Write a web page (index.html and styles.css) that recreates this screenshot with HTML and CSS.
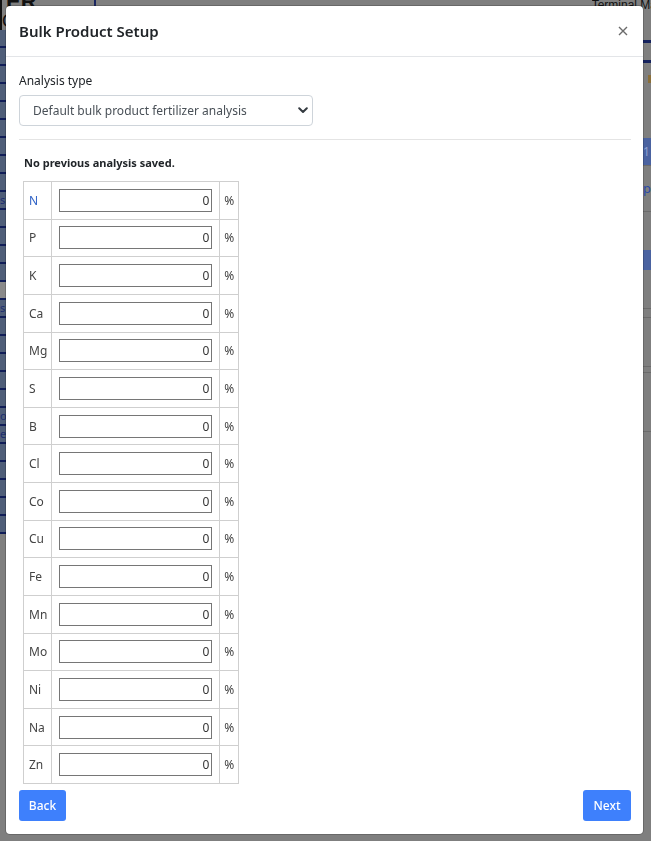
FILE: index.html
```html
<!DOCTYPE html>
<html lang="en">
<head>
<meta charset="utf-8">
<title>Bulk Product Setup</title>
<link rel="stylesheet" href="styles.css">
</head>
<body>
<div class="page">
  <div class="sidebar">
    <div class="brand"><span class="brand-text">ER</span><span class="brand-c">C</span></div>
    <div class="side-list">
      <div class="side-item"></div><div class="side-item"></div><div class="side-item"></div><div class="side-item"></div>
      <div class="side-item"></div><div class="side-item"></div><div class="side-item"></div><div class="side-item"></div>
      <div class="side-item"></div><div class="side-item"><span>s</span></div><div class="side-item"></div><div class="side-item"></div>
      <div class="side-item"></div><div class="side-item"></div><div class="side-item gray"></div><div class="side-item"><span>s</span></div>
      <div class="side-item"></div><div class="side-item"></div><div class="side-item"></div><div class="side-item"></div>
      <div class="side-item"></div><div class="side-item"><span>on</span></div><div class="side-item"><span>e</span></div><div class="side-item"></div>
      <div class="side-item"></div><div class="side-item"></div><div class="side-item"></div><div class="side-item"></div>
    </div>
  </div>
  <div class="main">
    <div class="topbar"><span class="top-title">Terminal Ma</span></div>
    <div class="right-strip">
      <div class="rs-line navy"></div>
      <div class="rs-gap g18"></div>
      <div class="rs-line navy"></div>
      <div class="rs-gap g12"></div>
      <div class="rs-tan"></div>
      <div class="rs-gap g56"></div>
      <div class="rs-blue">1</div>
      <div class="rs-line dark"></div>
      <div class="rs-gap g16"></div>
      <div class="rs-p">p</div>
      <div class="rs-gap g18"></div>
      <div class="rs-line dark"></div>
      <div class="rs-gap g38"></div>
      <div class="rs-blue small"></div>
      <div class="rs-gap g38"></div>
      <div class="rs-line dark"></div>
      <div class="rs-gap g8"></div>
      <div class="rs-line dark"></div>
      <div class="rs-gap g48"></div>
      <div class="rs-line dark"></div>
      <div class="rs-gap g5"></div>
      <div class="rs-line dark"></div>
      <div class="rs-gap g58"></div>
      <div class="rs-line dark"></div>
    </div>
  </div>
</div>

<div class="modal">
  <div class="modal-header">
    <h5 class="modal-title">Bulk Product Setup</h5>
    <button class="close" aria-label="Close">
      <svg width="10" height="10" viewBox="0 0 10 10"><path d="M1 1L9 9M9 1L1 9" stroke="#6b6b6b" stroke-width="1.4" fill="none"/></svg>
    </button>
  </div>
  <div class="modal-body">
    <label class="field-label">Analysis type</label>
    <div class="select">
      <span>Default bulk product fertilizer analysis</span>
      <svg class="chev" width="10" height="7" viewBox="0 0 10 7"><path d="M1.2 1.3L5 5L8.8 1.3" stroke="#343a40" stroke-width="2" fill="none" stroke-linecap="round" stroke-linejoin="round"/></svg>
    </div>
    <div class="divider"></div>
    <div class="note">No previous analysis saved.</div>
    <table class="analysis">
      <tbody>
        <tr><td class="el link">N</td><td class="val"><input class="num" value="0"></td><td class="pct">%</td></tr>
        <tr><td class="el">P</td><td class="val"><input class="num" value="0"></td><td class="pct">%</td></tr>
        <tr><td class="el">K</td><td class="val"><input class="num" value="0"></td><td class="pct">%</td></tr>
        <tr><td class="el">Ca</td><td class="val"><input class="num" value="0"></td><td class="pct">%</td></tr>
        <tr><td class="el">Mg</td><td class="val"><input class="num" value="0"></td><td class="pct">%</td></tr>
        <tr><td class="el">S</td><td class="val"><input class="num" value="0"></td><td class="pct">%</td></tr>
        <tr><td class="el">B</td><td class="val"><input class="num" value="0"></td><td class="pct">%</td></tr>
        <tr><td class="el">Cl</td><td class="val"><input class="num" value="0"></td><td class="pct">%</td></tr>
        <tr><td class="el">Co</td><td class="val"><input class="num" value="0"></td><td class="pct">%</td></tr>
        <tr><td class="el">Cu</td><td class="val"><input class="num" value="0"></td><td class="pct">%</td></tr>
        <tr><td class="el">Fe</td><td class="val"><input class="num" value="0"></td><td class="pct">%</td></tr>
        <tr><td class="el">Mn</td><td class="val"><input class="num" value="0"></td><td class="pct">%</td></tr>
        <tr><td class="el">Mo</td><td class="val"><input class="num" value="0"></td><td class="pct">%</td></tr>
        <tr><td class="el">Ni</td><td class="val"><input class="num" value="0"></td><td class="pct">%</td></tr>
        <tr><td class="el">Na</td><td class="val"><input class="num" value="0"></td><td class="pct">%</td></tr>
        <tr><td class="el">Zn</td><td class="val"><input class="num" value="0"></td><td class="pct">%</td></tr>
      </tbody>
    </table>
    <div class="footer">
      <button class="btn back">Back</button>
      <button class="btn next">Next</button>
    </div>
  </div>
</div>
</body>
</html>
```

FILE: styles.css
```css
html, body {
  margin: 0;
  padding: 0;
}
body {
  background: #7f7f7f;
  font-family: "Noto Sans", "Open Sans", sans-serif;
  height: 841px;
  overflow: hidden;
}

/* dimmed page behind the modal */
.page {
  display: flex;
  height: 841px;
}
.sidebar {
  width: 96px;
  display: flex;
  flex-direction: column;
}
.brand {
  height: 30px;
  overflow: hidden;
  display: flex;
  flex-direction: column;
  border-left: 2px solid #111;
  border-right: 2px solid #1a2660;
}
.brand-text {
  font-family: "Liberation Sans", sans-serif;
  font-weight: 700;
  font-size: 22px;
  line-height: 12px;
  height: 8px;
  overflow: hidden;
  color: #111;
  padding-left: 4px;
  display: flex;
  align-items: flex-end;
}
.brand-c {
  font-family: "Liberation Sans", sans-serif;
  font-size: 18px;
  line-height: 18px;
  margin-top: 4px;
  color: #111;
}
.side-list {
  display: flex;
  flex-direction: column;
  background: #4f5e79;
}
.side-item {
  height: 16px;
  border-bottom: 2px solid #101d58;
  font-size: 11px;
  line-height: 16px;
  color: #1d2d70;
  overflow: hidden;
}
.side-item.gray {
  background: #8a8a8a;
}
.main {
  flex: 1;
  display: flex;
  flex-direction: column;
  align-items: flex-end;
}
.topbar {
  height: 40px;
  width: 100%;
  display: flex;
  justify-content: flex-end;
}
.top-title {
  font-family: "Liberation Sans", sans-serif;
  font-size: 12px;
  line-height: 10px;
  height: 9px;
  overflow: hidden;
  color: #111;
  margin-right: -6px;
}
.right-strip {
  width: 8px;
  display: flex;
  flex-direction: column;
}
.rs-line { height: 2px; }
.rs-line.navy { background: #16235e; height: 3px; }
.rs-line.dark { background: #6b6b6b; height: 1px; }
.rs-gap.g5 { height: 5px; }
.rs-gap.g8 { height: 8px; }
.rs-gap.g12 { height: 12px; }
.rs-gap.g16 { height: 16px; }
.rs-gap.g18 { height: 17px; }
.rs-gap.g38 { height: 38px; }
.rs-gap.g48 { height: 48px; }
.rs-gap.g56 { height: 55px; }
.rs-gap.g58 { height: 58px; }
.rs-tan {
  height: 8px;
  width: 3px;
  background: #8a6f3a;
  margin-left: 5px;
}
.rs-blue {
  height: 27px;
  background: #4a62a0;
  color: #8ea0d0;
  font-size: 12px;
  line-height: 27px;
}
.rs-blue.small { height: 20px; }
.rs-p {
  font-size: 13px;
  line-height: 12px;
  color: #2a4aa8;
}

/* modal */
.modal {
  position: fixed;
  left: 6px;
  top: 6px;
  width: 637px;
  height: 828px;
  background: #fff;
  border-radius: 4px;
  box-shadow: 0 0 0 1px rgba(0, 0, 0, 0.18);
  display: flex;
  flex-direction: column;
  color: #212529;
}
.modal-header {
  height: 50px;
  border-bottom: 1px solid #e3e5e8;
  padding: 0 15px 0 13px;
  display: flex;
  align-items: center;
  justify-content: space-between;
}
.modal-title {
  margin: 0;
  font-size: 15px;
  font-weight: 600;
  line-height: 20px;
  color: #212529;
}
.close {
  border: 0;
  background: transparent;
  padding: 0;
  width: 10px;
  height: 10px;
  display: flex;
}
.modal-body {
  padding: 15px 12px 13px 13px;
  display: flex;
  flex-direction: column;
  align-items: stretch;
  flex: 1;
}
.field-label {
  font-size: 12px;
  line-height: 18px;
  color: #212529;
}
.select {
  margin-top: 5px;
  width: 294px;
  height: 31px;
  box-sizing: border-box;
  border: 1px solid #ced4da;
  border-radius: 4px;
  padding: 0 4px 0 13px;
  display: flex;
  align-items: center;
  justify-content: space-between;
  font-size: 12px;
  color: #495057;
}
.chev { display: block; }
.divider {
  margin-top: 13px;
  height: 1px;
  background: #e4e4e4;
}
.note {
  margin-top: 15px;
  padding-left: 5px;
  font-size: 11px;
  font-weight: 700;
  line-height: 15px;
  color: #212529;
}
.analysis {
  align-self: flex-start;
  margin-top: 11px;
  margin-left: 4px;
  border-collapse: separate;
  border-spacing: 0;
  border-top: 1px solid #cfcfcf;
  border-left: 1px solid #cfcfcf;
  font-size: 12px;
  color: #444;
}
.analysis td {
  border-right: 1px solid #cfcfcf;
  border-bottom: 1px solid #cfcfcf;
  padding-top: 6.8125px;
  padding-bottom: 6.8125px;
  line-height: 23px;
  vertical-align: middle;
}
.analysis td.el {
  width: 18px;
  padding-left: 5px;
  padding-right: 4px;
  white-space: nowrap;
}
.analysis td.link { color: #2f62c6; }
.analysis td.val {
  width: 153px;
  padding-left: 7px;
  padding-right: 7px;
}
.analysis td.pct {
  width: 10px;
  padding-left: 4px;
  padding-right: 4px;
}
.num {
  display: block;
  box-sizing: border-box;
  width: 153px;
  height: 23px;
  margin: 0;
  border: 1px solid #767676;
  border-radius: 0;
  padding: 0 2px 0 2px;
  text-align: right;
  font-family: "Noto Sans", "Open Sans", sans-serif;
  font-size: 12px;
  color: #333;
  background: #fff;
}
.footer {
  margin-top: 6px;
  display: flex;
  justify-content: space-between;
}
.btn {
  height: 31px;
  border: 0;
  border-radius: 3px;
  background: #3e80fc;
  color: #fff;
  font-family: "Noto Sans", "Open Sans", sans-serif;
  font-size: 12px;
  font-weight: 500;
  padding: 0;
}
.btn.back { width: 47px; }
.btn.next { width: 48px; }
```
